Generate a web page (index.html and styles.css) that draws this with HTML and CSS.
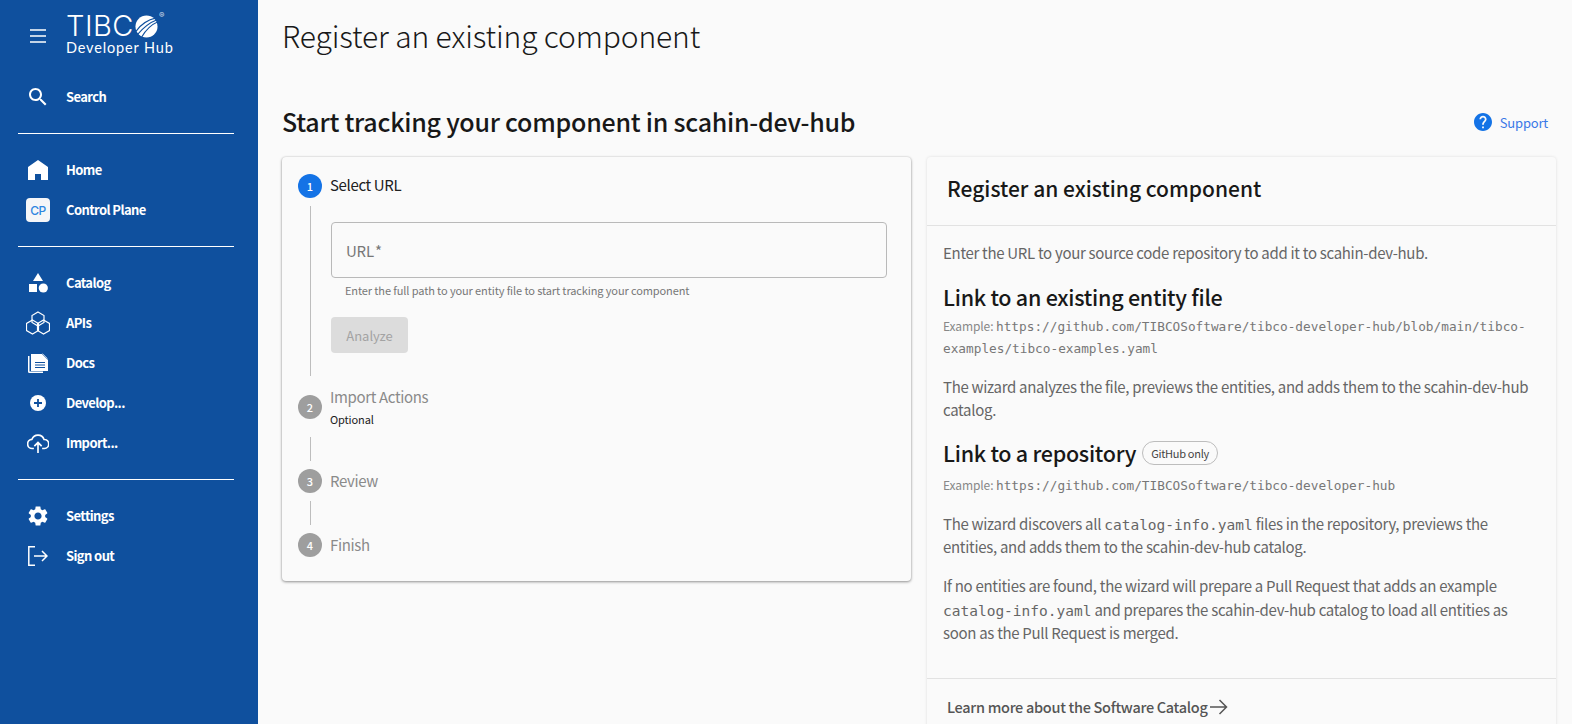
FILE: index.html
```html
<!DOCTYPE html>
<html lang="en">
<head>
  <meta charset="UTF-8">
  <title>Register an existing component</title>
  <link rel="stylesheet" href="styles.css">
</head>
<body>

<!-- Sidebar -->
<nav class="sidebar">
  <div class="brand">
    <svg class="burger" viewBox="0 0 16 14"><path d="M0 1h16M0 7h16M0 13h16" stroke="#fff" stroke-width="1.6"/></svg>
    <div class="logo">
      <div class="logo-top">
        <span class="logo-word">TIBC</span>
        <svg class="logo-ball" viewBox="0 0 24 24">
          <circle cx="12" cy="12" r="11.5" fill="#fff"/>
          <path d="M1 17C6 10 13 5 22 3M3 20C9 13 15 8 23 5M7 23C11 16 17 10 24 7" fill="none" stroke="#0f509e" stroke-width="1.2"/>
        </svg>
        <span class="logo-reg">®</span>
      </div>
      <div class="logo-sub">Developer Hub</div>
    </div>
  </div>

  <a class="nav-item">
    <span class="nav-icon"><svg width="24" height="24" viewBox="0 0 24 24"><path fill="#fff" d="M15.5 14h-.79l-.28-.27C15.41 12.59 16 11.11 16 9.5 16 5.91 13.09 3 9.5 3S3 5.91 3 9.5 5.91 16 9.5 16c1.61 0 3.09-.59 4.23-1.57l.27.28v.79l5 4.99L20.49 19l-4.99-5zm-6 0C7.01 14 5 11.99 5 9.5S7.01 5 9.5 5 14 7.01 14 9.5 11.99 14 9.5 14z"/></svg></span>
    Search
  </a>

  <hr class="nav-rule">

  <div class="nav-group">
    <a class="nav-item">
      <span class="nav-icon"><svg width="20" height="20" viewBox="0 0 20 20"><path fill="#fff" d="M10 0l10 7v13h-7v-6H7v6H0V7z"/></svg></span>
      Home
    </a>
    <a class="nav-item">
      <span class="nav-icon"><span class="cp-badge">CP</span></span>
      Control Plane
    </a>
  </div>

  <hr class="nav-rule">

  <div class="nav-group">
    <a class="nav-item">
      <span class="nav-icon"><svg width="20" height="20" viewBox="0 0 20 20"><path fill="#fff" d="M10 0l5 8H5zM1 11h8v8H1z"/><circle cx="15.3" cy="15" r="4.6" fill="#fff"/></svg></span>
      Catalog
    </a>
    <a class="nav-item">
      <span class="nav-icon"><svg width="24" height="24" viewBox="0 0 24 24" fill="none" stroke="#fff" stroke-width="1.2"><path d="M12 1l6 3.500v7L12 15l-6-3.500v-7z"/><path d="M6.500 9l6 3.500v7L6.500 23l-6-3.500v-7z"/><path d="M17.500 9l6 3.500v7L17.500 23l-6-3.500v-7z"/></svg></span>
      APIs
    </a>
    <a class="nav-item">
      <span class="nav-icon"><svg width="20" height="20" viewBox="0 0 20 20"><path fill="#fff" d="M0 3h1.500v15.500H15V20H1.500Q0 20 0 18.500z"/><path fill="#fff" d="M3 1h11l6 6v11H3z"/><path d="M14.500 0.500l5 5" stroke="#fff" stroke-width="1" opacity="0.6"/><path d="M7 9.500h10M7 12h10M7 14.500h10" stroke="#0f509e" stroke-width="1"/></svg></span>
      Docs
    </a>
    <a class="nav-item">
      <span class="nav-icon"><svg width="16" height="16" viewBox="0 0 16 16"><circle cx="8" cy="8" r="8" fill="#fff"/><path d="M8 4v8M4 8h8" stroke="#0f509e" stroke-width="1.800"/></svg></span>
      Develop...
    </a>
    <a class="nav-item">
      <span class="nav-icon"><svg width="22" height="22" viewBox="0 0 24 24" fill="none" stroke="#fff" stroke-width="1.800"><path d="M7.500 18H6a5 5 0 0 1-.6-10A7 7 0 0 1 18.600 8.200 4.900 4.900 0 0 1 19 18h-2.500"/><path d="M12 23v-11M8 15.500l4-4 4 4"/></svg></span>
      Import...
    </a>
  </div>

  <hr class="nav-rule">

  <div class="nav-group">
    <a class="nav-item">
      <span class="nav-icon"><svg width="24" height="24" viewBox="0 0 24 24"><path fill="#fff" d="M19.140 12.940c.04-.3.06-.61.06-.94 0-.32-.02-.64-.07-.94l2.030-1.580c.18-.14.23-.41.12-.61l-1.920-3.320c-.12-.22-.37-.29-.59-.22l-2.390.96c-.5-.38-1.030-.7-1.620-.94l-.36-2.540c-.04-.24-.24-.41-.48-.41h-3.840c-.24 0-.43.17-.47.41l-.36 2.540c-.59.24-1.130.57-1.620.94l-2.390-.96c-.22-.08-.47 0-.59.22L2.740 8.870c-.12.21-.08.47.12.61l2.030 1.580c-.05.3-.09.63-.09.94s.02.64.07.94l-2.030 1.580c-.18.14-.23.41-.12.61l1.920 3.320c.12.22.37.29.59.22l2.390-.96c.5.38 1.030.7 1.620.94l.36 2.540c.05.24.24.41.48.41h3.840c.24 0 .44-.17.47-.41l.36-2.540c.59-.24 1.130-.56 1.620-.94l2.390.96c.22.08.47 0 .59-.22l1.920-3.320c.12-.22.07-.47-.12-.61l-2.010-1.580zM12 15.600c-1.980 0-3.600-1.620-3.600-3.600s1.620-3.600 3.600-3.600 3.600 1.620 3.600 3.600-1.620 3.600-3.600 3.600z"/></svg></span>
      Settings
    </a>
    <a class="nav-item">
      <span class="nav-icon"><svg width="20" height="20" viewBox="0 0 20 20" fill="none" stroke="#fff" stroke-width="1.500"><path d="M7 .8H.8v18.400H7"/><path d="M6 10h13M14 5l5 5-5 5"/></svg></span>
      Sign out
    </a>
  </div>
</nav>

<!-- Inhalt -->
<main class="content">
  <h1 class="page-title">Register an existing component</h1>

  <div class="section-head">
    <h2>Start tracking your component in scahin-dev-hub</h2>
    <a class="support">
      <svg width="18" height="18" viewBox="2 2 20 20"><path fill="#1473e6" d="M12 2C6.480 2 2 6.480 2 12s4.480 10 10 10 10-4.480 10-10S17.520 2 12 2zm1 17h-2v-2h2v2zm2.070-7.750l-.9.92C13.450 12.900 13 13.500 13 15h-2v-.5c0-1.100.45-2.100 1.170-2.830l1.240-1.260c.37-.36.59-.86.59-1.410 0-1.100-.9-2-2-2s-2 .9-2 2H8c0-2.210 1.790-4 4-4s4 1.790 4 4c0 .88-.36 1.680-.93 2.250z"/></svg>
      Support
    </a>
  </div>

  <div class="columns">
    <section class="card stepper">
      <div class="step-head">
        <span class="step-num active">1</span>
        <span class="step-label active">Select URL</span>
      </div>
      <div class="step-body">
        <div class="url-field">URL *</div>
        <p class="helper">Enter the full path to your entity file to start tracking your component</p>
        <button class="analyze" disabled>Analyze</button>
      </div>

      <div class="step-head step-two">
        <span class="step-num">2</span>
        <div>
          <div class="step-label">Import Actions</div>
          <div class="step-optional">Optional</div>
        </div>
      </div>
      <div class="connector"></div>
      <div class="step-head">
        <span class="step-num">3</span>
        <span class="step-label">Review</span>
      </div>
      <div class="connector"></div>
      <div class="step-head">
        <span class="step-num">4</span>
        <span class="step-label">Finish</span>
      </div>
    </section>

    <section class="card info">
      <h3 class="info-title">Register an existing component</h3>
      <div class="info-body">
        <p>Enter the URL to your source code repository to add it to scahin-dev-hub.</p>
        <h4>Link to an existing entity file</h4>
        <p class="example">Example: <code>https://github.com/TIBCOSoftware/tibco-developer-hub/blob/main/tibco-examples/tibco-examples.yaml</code></p>
        <p>The wizard analyzes the file, previews the entities, and adds them to the scahin-dev-hub catalog.</p>
        <h4 class="repo-head">Link to a repository <span class="chip">GitHub only</span></h4>
        <p class="example repo-example">Example: <code>https://github.com/TIBCOSoftware/tibco-developer-hub</code></p>
        <p>The wizard discovers all <code>catalog-info.yaml</code> files in the repository, previews the entities, and adds them to the scahin-dev-hub catalog.</p>
        <p>If no entities are found, the wizard will prepare a Pull Request that adds an example <code>catalog-info.yaml</code> and prepares the scahin-dev-hub catalog to load all entities as soon as the Pull Request is merged.</p>
      </div>
      <div class="info-foot">
        Learn more about the Software Catalog
        <svg width="18" height="16" viewBox="0 0 18 16" fill="none" stroke="#555" stroke-width="1.500"><path d="M0 8h16.500M9.500 1l7 7-7 7"/></svg>
      </div>
    </section>
  </div>
</main>

</body>
</html>
```

FILE: styles.css
```css
* {
  margin: 0;
  padding: 0;
  box-sizing: border-box;
}

body {
  font-family: 'Noto Sans CJK SC', 'Noto Sans', sans-serif;
  background: #fafafa;
  color: #181818;
  height: 100vh;
  display: flex;
  overflow: hidden;
}

/* Sidebar */
.sidebar {
  width: 258px;
  flex: none;
  background: #0f509e;
  color: white;
  padding: 0 24px 0 18px;
}

.brand {
  display: flex;
  align-items: flex-start;
  height: 77px;
  padding: 14px 0 0 12px;
}

.burger {
  width: 16px;
  height: 14px;
  margin-top: 15px;
  margin-right: 20px;
  flex: none;
}

.logo-top {
  display: flex;
  align-items: center;
  height: 24px;
}

.logo-word {
  font-family: 'Inter', sans-serif;
  font-weight: 300;
  font-size: 29px;
  line-height: 24px;
  letter-spacing: 0.5px;
}

.logo-ball {
  width: 23px;
  height: 23px;
  margin-left: 1px;
}

.logo-reg {
  font-family: 'Inter', sans-serif;
  font-size: 8px;
  line-height: 8px;
  align-self: flex-start;
  margin: -3px 0 0 1px;
  opacity: 0.8;
}

.logo-sub {
  font-family: 'Lato', sans-serif;
  font-size: 14.5px;
  line-height: 16px;
  letter-spacing: 0.85px;
  margin-top: 2px;
}

.nav-item {
  display: flex;
  align-items: center;
  height: 40px;
  padding-bottom: 2px;
  font-size: 13px;
  font-weight: 700;
  letter-spacing: -0.6px;
  color: white;
}

.nav-icon {
  width: 48px;
  margin-top: 2px;
  padding-right: 8px;
  flex: none;
  display: flex;
  justify-content: center;
  align-items: center;
}

.nav-rule {
  border: none;
  border-top: 1px solid white;
  margin: 16px 0;
}

.nav-group {
  display: flex;
  flex-direction: column;
}

.cp-badge {
  width: 24px;
  height: 24px;
  border-radius: 4px;
  background: #f5f6f8;
  color: #2f86e0;
  font-family: 'Inter', sans-serif;
  font-size: 12px;
  font-weight: 500;
  display: flex;
  align-items: center;
  justify-content: center;
}

/* Inhalt */
.content {
  flex: 1;
  min-width: 0;
  padding: 0 16px 0 24px;
}

.page-title {
  font-size: 30px;
  font-weight: 300;
  line-height: 40px;
  letter-spacing: -0.13px;
  margin-top: 15px;
}

.section-head {
  display: flex;
  align-items: center;
  justify-content: space-between;
  margin-top: 47px;
  height: 40px;
}

.section-head h2 {
  font-size: 25px;
  font-weight: 500;
  line-height: 38px;
  letter-spacing: -0.25px;
  padding-bottom: 2px;
}

.support {
  display: flex;
  align-items: center;
  gap: 8px;
  font-size: 13px;
  letter-spacing: -0.2px;
  color: #3b78e7;
  margin-right: 8px;
}

.columns {
  display: grid;
  grid-template-columns: 1fr 1fr;
  gap: 16px;
  margin-top: 15px;
  align-items: start;
}

.card {
  background: #fafafa;
  border-radius: 4px;
}

/* Stepper */
.stepper {
  padding: 17px 16px 24px;
  box-shadow: 0 1px 3px rgba(0, 0, 0, 0.4), 0 0 2px rgba(0, 0, 0, 0.12);
}

.step-head {
  display: flex;
  align-items: center;
  gap: 8px;
}

.step-num {
  width: 24px;
  height: 24px;
  border-radius: 50%;
  background: #9e9e9e;
  color: white;
  font-size: 11px;
  font-weight: 500;
  display: flex;
  align-items: center;
  justify-content: center;
  flex: none;
}

.step-num.active {
  background: #1473e6;
}

.step-label {
  font-size: 15px;
  line-height: 24px;
  letter-spacing: -0.35px;
  color: #8a8a8a;
}

.step-label.active {
  color: #212121;
  margin-top: -2px;
}

.step-optional {
  font-size: 11px;
  line-height: 14px;
  letter-spacing: -0.1px;
  color: #212121;
  margin-top: 3px;
}

.step-two {
  height: 24px;
  margin-top: 19px;
}

.step-two > div {
  margin-top: -4px;
}

.step-body {
  margin: 8px 0 0 12px;
  border-left: 1px solid #bdbdbd;
  padding: 16px 8px 22px 20px;
  height: 170px;
}

.url-field {
  height: 56px;
  border: 1px solid #b9b9b9;
  border-radius: 4px;
  padding: 0 14px;
  font-size: 15px;
  line-height: 55px;
  letter-spacing: -0.2px;
  word-spacing: -2px;
  color: #777;
}

.helper {
  font-size: 11px;
  line-height: 14px;
  letter-spacing: -0.11px;
  color: #777;
  margin: 5px 14px 0;
}

.analyze {
  display: block;
  width: 77px;
  height: 36px;
  margin-top: 20px;
  border: none;
  border-radius: 4px;
  background: #dcdcdc;
  color: #a3a3a3;
  font-family: inherit;
  font-size: 13px;
}

.connector {
  height: 24px;
  margin: 18px 0 8px 12px;
  border-left: 1px solid #bdbdbd;
}

.connector + .step-head ~ .connector {
  margin-top: 8px;
}

/* Info */
.info {
  box-shadow: 0 0 3px rgba(0, 0, 0, 0.12);
}

.info-title {
  font-size: 21px;
  font-weight: 500;
  line-height: 28px;
  padding: 17px 20px 23px;
  border-bottom: 1px solid #e2e2e2;
}

.info-body {
  padding: 15px 16px 0;
  height: 453px;
  border-bottom: 1px solid #e2e2e2;
  font-size: 15px;
  line-height: 23.6px;
  letter-spacing: -0.3px;
  color: #666;
}

.info-body p {
  margin-bottom: 15px;
}

.info-body h4 {
  font-size: 21.5px;
  font-weight: 500;
  line-height: 30px;
  letter-spacing: -0.27px;
  color: #181818;
  margin: 17px 0 3px;
  display: flex;
  align-items: center;
  gap: 6px;
}

.info-body h4.repo-head {
  margin: 16px 0 6px;
}

.info-body code {
  font-family: 'DejaVu Sans Mono', monospace;
  font-size: 14.5px;
  line-height: 1;
  letter-spacing: 0;
}

.info-body .example {
  font-size: 12px;
  line-height: 22px;
  letter-spacing: -0.1px;
  color: #888;
  margin-bottom: 16px;
}

.info-body .example code {
  font-size: 12.75px;
  color: #777;
}

.chip {
  font-size: 11px;
  font-weight: 400;
  line-height: 22px;
  height: 24px;
  width: 76px;
  text-align: center;
  letter-spacing: -0.3px;
  border: 1px solid #bdbdbd;
  border-radius: 12px;
  color: #444;
}

.info-foot {
  display: flex;
  align-items: center;
  gap: 3px;
  padding: 17px 20px;
  font-size: 14.5px;
  font-weight: 500;
  letter-spacing: -0.3px;
  color: #555;
}
```
